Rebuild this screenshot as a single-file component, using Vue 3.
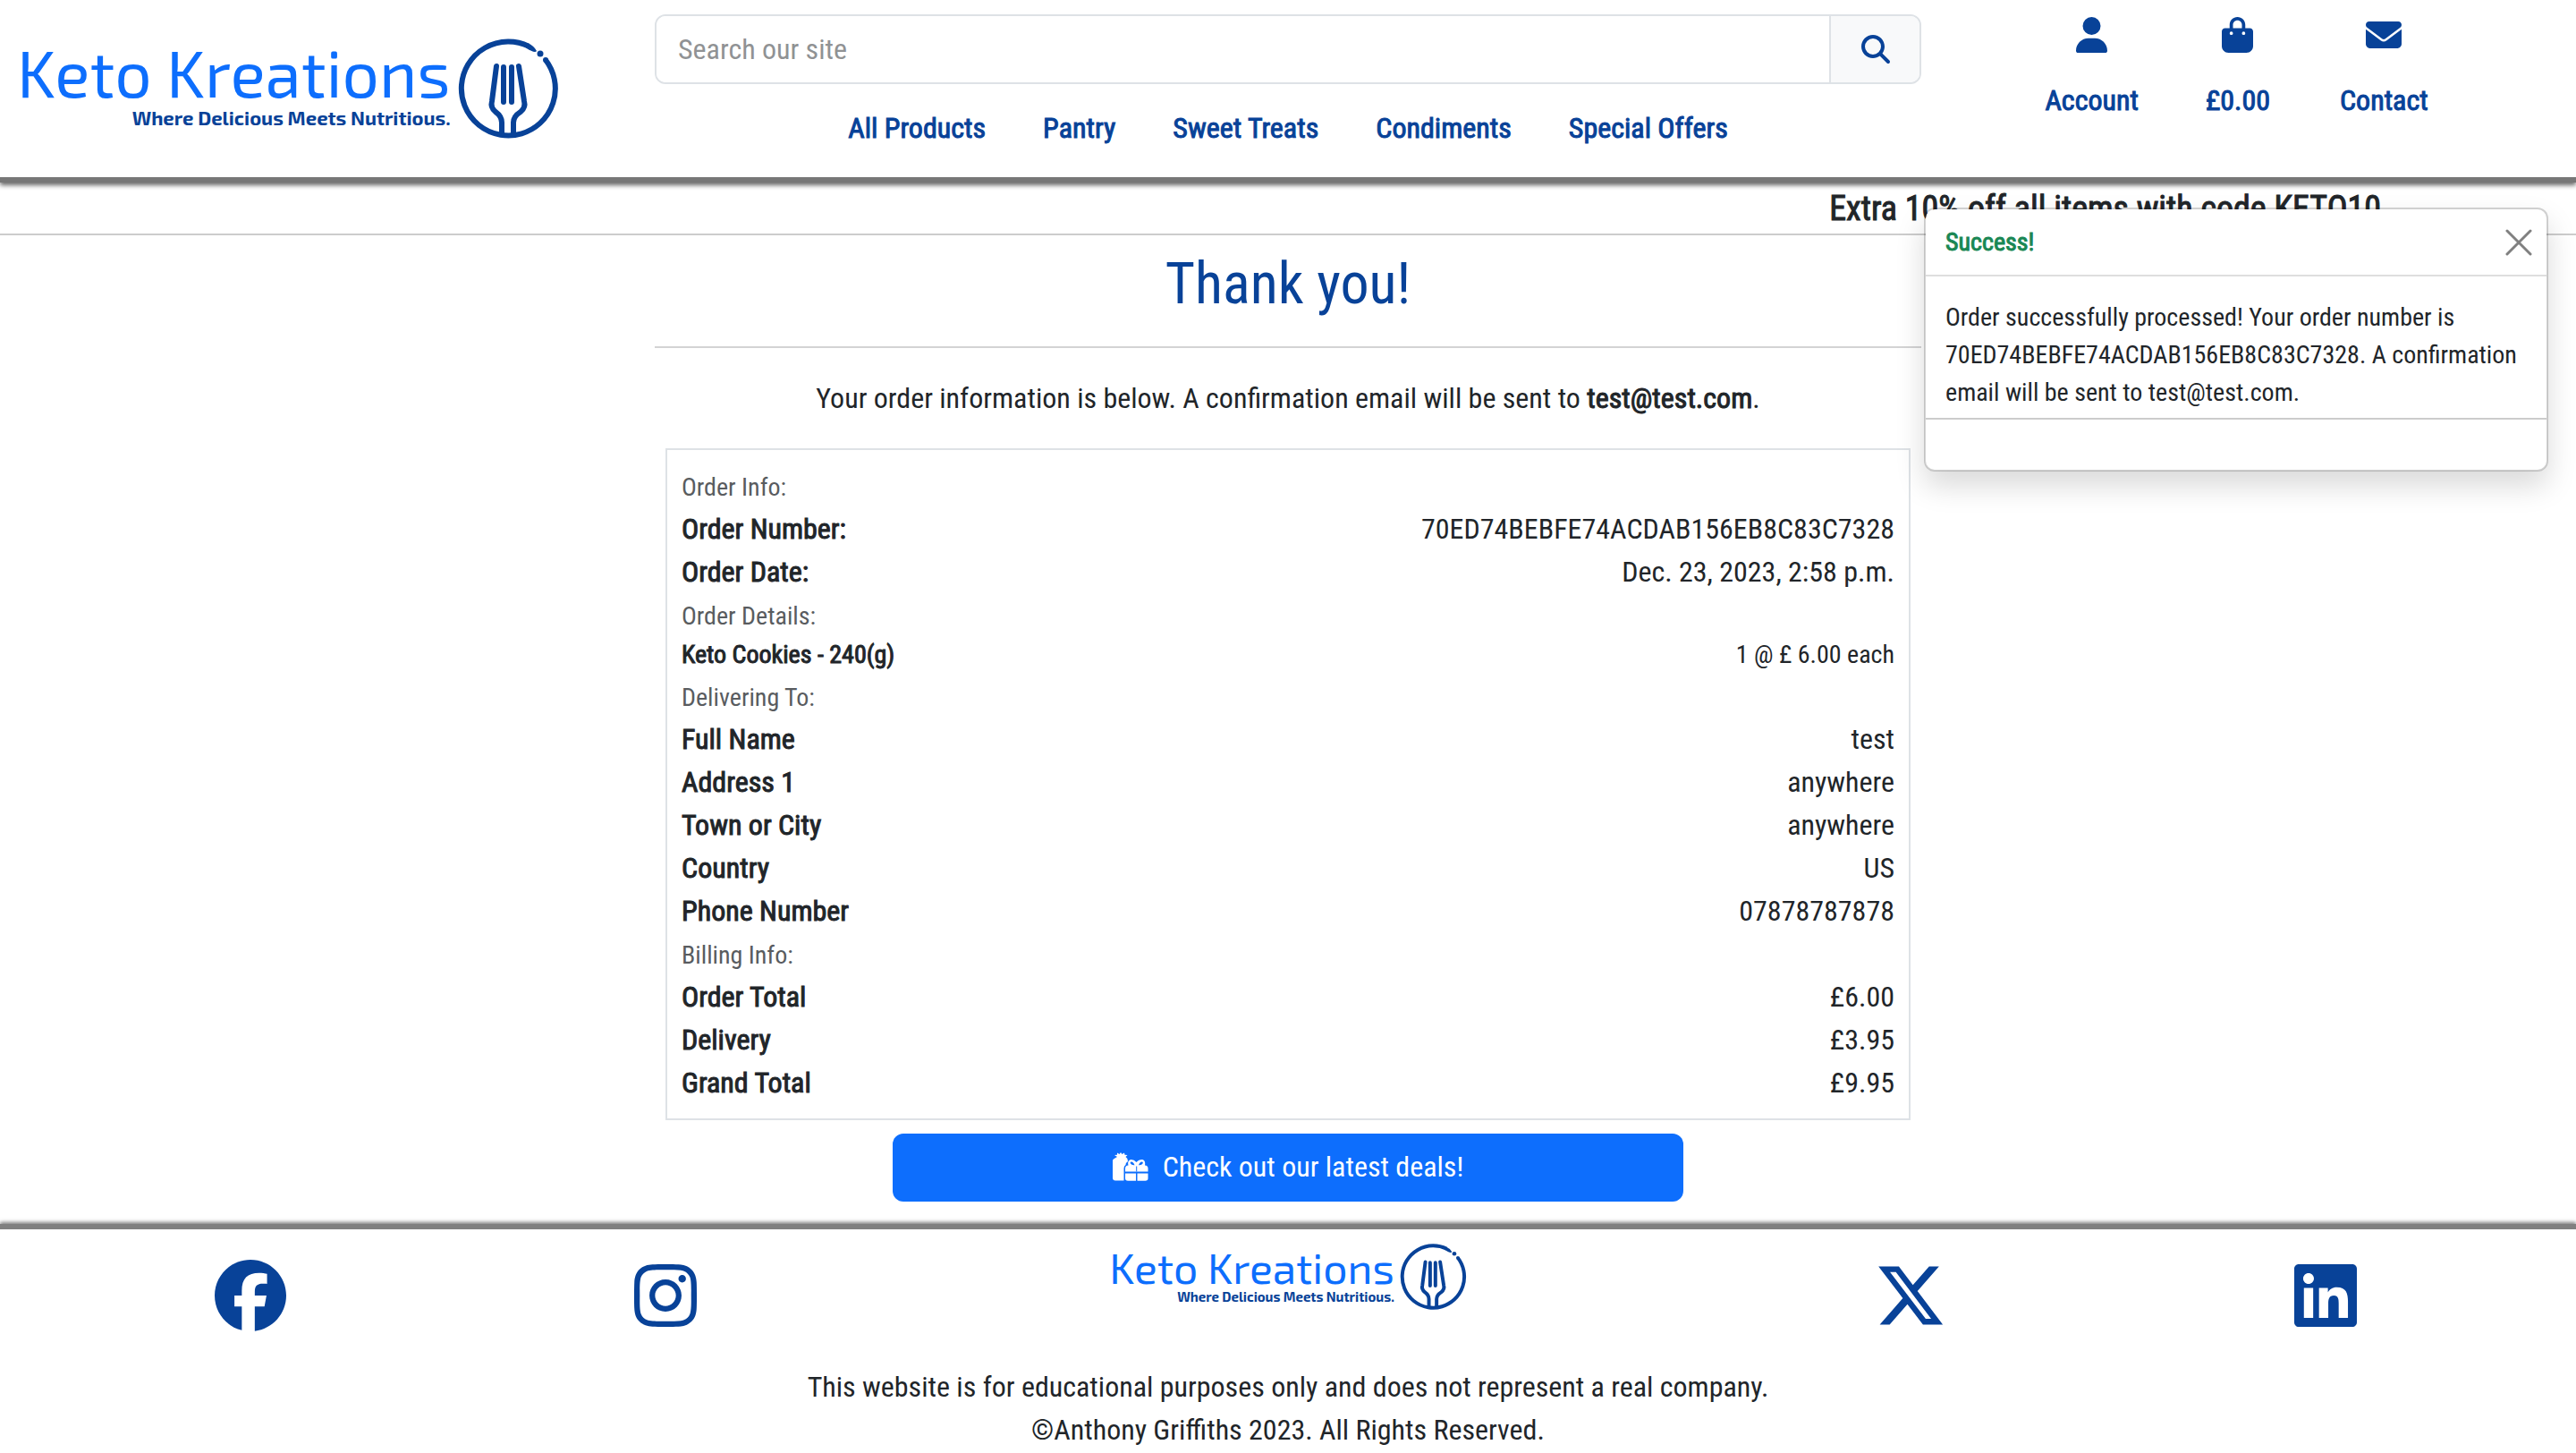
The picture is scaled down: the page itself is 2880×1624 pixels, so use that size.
<script setup>
import { ref } from 'vue'

const query = ref('')
const toastOpen = ref(true)

const categories = ['All Products', 'Pantry', 'Sweet Treats', 'Condiments', 'Special Offers']

const shortcuts = [
  {
    label: 'Account',
    box: '0 0 448 512',
    path: 'M224 256A128 128 0 1 0 224 0a128 128 0 1 0 0 256zm-45.7 48C79.8 304 0 383.8 0 482.3C0 498.7 13.3 512 29.7 512H418.3c16.4 0 29.7-13.3 29.7-29.7C448 383.8 368.2 304 269.7 304H178.3z',
  },
  {
    label: '£0.00',
    box: '0 0 448 512',
    path: 'M160 112c0-35.3 28.7-64 64-64s64 28.7 64 64v48H160V112zm-48 48H48c-26.5 0-48 21.5-48 48V416c0 53 43 96 96 96H352c53 0 96-43 96-96V208c0-26.5-21.5-48-48-48H336V112C336 50.1 285.9 0 224 0S112 50.1 112 112v48zm24 48a24 24 0 1 1 0 48 24 24 0 1 1 0-48zm152 24a24 24 0 1 1 48 0 24 24 0 1 1 -48 0z',
  },
  {
    label: 'Contact',
    box: '0 0 512 512',
    path: 'M48 64C21.5 64 0 85.5 0 112c0 15.1 7.1 29.3 19.2 38.4L236.8 313.6c11.4 8.5 27 8.5 38.4 0L492.8 150.4c12.1-9.1 19.2-23.3 19.2-38.4c0-26.5-21.5-48-48-48H48zM0 176V384c0 35.3 28.7 64 64 64H448c35.3 0 64-28.7 64-64V176L294.4 339.2c-22.8 17.1-54 17.1-76.8 0L0 176z',
  },
]

const orderNumber = '70ED74BEBFE74ACDAB156EB8C83C7328'

const sections = [
  {
    title: 'Order Info:',
    rows: [
      ['Order Number:', orderNumber],
      ['Order Date:', 'Dec. 23, 2023, 2:58 p.m.'],
    ],
  },
  { title: 'Order Details:', small: true, rows: [['Keto Cookies - 240(g)', '1 @ £ 6.00 each']] },
  {
    title: 'Delivering To:',
    rows: [
      ['Full Name', 'test'],
      ['Address 1', 'anywhere'],
      ['Town or City', 'anywhere'],
      ['Country', 'US'],
      ['Phone Number', '07878787878'],
    ],
  },
  {
    title: 'Billing Info:',
    rows: [
      ['Order Total', '£6.00'],
      ['Delivery', '£3.95'],
      ['Grand Total', '£9.95'],
    ],
  },
]
</script>

<template>
  <svg class="defs" aria-hidden="true">
    <symbol id="fork-mark" viewBox="0 0 113 112">
      <g fill="none" stroke="currentColor" stroke-width="6" stroke-linecap="round" stroke-linejoin="round">
        <path d="M98 24A52.5 52.5 0 1 1 79 8.6" stroke-linecap="butt" />
        <path d="M43 31L38 70Q36 77 42 82Q49 87 49 94V106" />
        <path d="M68 31L74 70Q76 77 70 82Q62 87 62 94V106" />
        <path d="M51 32V71M60 32V71" />
      </g>
      <path fill="currentColor" d="M78 5.2Q85 8 88 14Q86 17 76 10.5z" />
      <circle fill="currentColor" cx="92" cy="17" r="3.5" />
      <circle fill="currentColor" cx="98" cy="24" r="3" />
    </symbol>
  </svg>

  <header class="header">
    <a href="#" class="logo">
      <span class="logo-words">
        <span class="logo-name">Keto Kreations</span>
        <span class="logo-tag">Where Delicious Meets Nutritious.</span>
      </span>
      <svg class="logo-mark"><use href="#fork-mark" /></svg>
    </a>

    <div class="middle">
      <form class="search" @submit.prevent>
        <input v-model="query" type="text" placeholder="Search our site" aria-label="Search our site" />
        <button type="submit" aria-label="Search">
          <svg viewBox="0 0 512 512"><path fill="currentColor" d="M416 208c0 45.9-14.9 88.3-40 122.7L502.6 457.4c12.5 12.5 12.5 32.8 0 45.3s-32.8 12.5-45.3 0L330.7 376C296.3 401.1 253.9 416 208 416C93.1 416 0 322.9 0 208S93.1 0 208 0S416 93.1 416 208zM208 352a144 144 0 1 0 0-288 144 144 0 1 0 0 288z" /></svg>
        </button>
      </form>
      <nav class="nav">
        <a v-for="item in categories" :key="item" href="#" class="heavy">{{ item }}</a>
      </nav>
    </div>

    <div class="shortcuts">
      <a v-for="item in shortcuts" :key="item.label" href="#">
        <svg :viewBox="item.box"><path fill="currentColor" :d="item.path" /></svg>
        <span class="heavy">{{ item.label }}</span>
      </a>
    </div>
  </header>

  <div class="promo heavy">Extra 10% off all items with code KETO10</div>

  <main class="main">
    <h1>Thank you!</h1>
    <hr />
    <p class="lead">
      Your order information is below. A confirmation email will be sent to
      <strong class="heavy">test@test.com</strong>.
    </p>

    <div class="order">
      <section v-for="section in sections" :key="section.title">
        <h2>{{ section.title }}</h2>
        <dl :class="{ small: section.small }">
          <div v-for="row in section.rows" :key="row[0]" class="row">
            <dt class="heavy">{{ row[0] }}</dt>
            <dd>{{ row[1] }}</dd>
          </div>
        </dl>
      </section>
    </div>

    <a href="#" class="deals">
      <svg viewBox="0 0 40 32">
        <g fill="#fff">
          <path d="M2.5 6.5L5 5 2 3 5 2.7 5 .5 7.5 2 9 0 10.500 2 13 .5 13.500 2.700 16.500 3 14.500 5Q17 6.500 17 10Q14 12 14.500 14Q12.500 15 12.500 18V31.500H3Q0 31.500 0 28.500V9Q0 7.500 2.500 6.500z" />
          <path d="M14 21.500V18Q14 14.500 17.500 14.500Q16 9 20.500 8Q24 8 26.500 11Q29 8 33 8Q37 9 36 14.500Q39.500 14.500 39.500 18V21.500z" />
          <path d="M14 23.500H26V31.800H17Q14 31.800 14 29zM27.500 23.500H39.500V29Q39.500 31.800 36.500 31.800H27.500z" />
        </g>
        <path d="M20 12.500Q19 10.500 21 10.500T24.500 14.200Q21 14.500 20 12.500zM33.500 12.500Q34.500 10.500 32.500 10.500T29 14.200Q32.500 14.500 33.500 12.500zM26.200 15.500H27.200V21.500H26.200z" fill="#0d6efd" />
      </svg>
      Check out our latest deals!
    </a>
  </main>

  <footer class="footer">
    <div class="social">
      <a href="#" aria-label="Facebook"><svg viewBox="0 0 512 512"><path fill="currentColor" d="M512 256C512 114.600 397.400 0 256 0S0 114.600 0 256C0 376 82.700 476.800 194.200 504.500V334.200H141.400V256h52.800V222.300c0-87.100 39.400-127.500 125-127.500c16.200 0 44.200 3.200 55.700 6.400V172c-6-.600-16.500-1-29.600-1c-42 0-58.200 15.900-58.200 57.200V256h83.600l-14.400 78.200H287V510.100C413.800 494.800 512 386.900 512 256z" /></svg></a>
      <a href="#" aria-label="Instagram"><svg viewBox="-32 0 512 512"><path fill="currentColor" d="M224.1 141c-63.6 0-114.9 51.3-114.9 114.9s51.3 114.9 114.9 114.9S339 319.5 339 255.900 287.700 141 224.100 141zm0 189.600c-41.100 0-74.700-33.500-74.700-74.700s33.500-74.700 74.700-74.700 74.700 33.500 74.700 74.700-33.600 74.700-74.700 74.700zm146.400-194.300c0 14.900-12 26.800-26.800 26.800-14.900 0-26.800-12-26.800-26.800s12-26.800 26.800-26.800 26.800 12 26.800 26.800zm76.100 27.200c-1.700-35.900-9.900-67.700-36.200-93.900-26.200-26.200-58-34.400-93.900-36.200-37-2.100-147.900-2.100-184.900 0-35.800 1.700-67.600 9.900-93.900 36.100s-34.400 58-36.200 93.900c-2.100 37-2.100 147.900 0 184.900 1.700 35.900 9.900 67.700 36.200 93.900s58 34.400 93.900 36.200c37 2.100 147.900 2.100 184.900 0 35.900-1.700 67.700-9.900 93.900-36.200 26.200-26.200 34.400-58 36.200-93.900 2.100-37 2.100-147.800 0-184.800zM398.800 388c-7.800 19.600-22.900 34.700-42.600 42.600-29.500 11.700-99.500 9-132.100 9s-102.700 2.600-132.100-9c-19.600-7.800-34.700-22.900-42.600-42.600-11.700-29.500-9-99.500-9-132.100s-2.600-102.700 9-132.100c7.800-19.600 22.900-34.700 42.600-42.600 29.500-11.700 99.500-9 132.100-9s102.700-2.600 132.100 9c19.600 7.800 34.700 22.900 42.600 42.600 11.700 29.500 9 99.500 9 132.100s2.700 102.700-9 132.100z" /></svg></a>
      <a href="#" class="logo logo-small">
        <span class="logo-words">
          <span class="logo-name">Keto Kreations</span>
          <span class="logo-tag">Where Delicious Meets Nutritious.</span>
        </span>
        <svg class="logo-mark"><use href="#fork-mark" /></svg>
      </a>
      <a href="#" aria-label="X"><svg viewBox="0 0 512 512"><path fill="currentColor" d="M389.2 48h70.6L305.6 224.200 487 464H345L233.700 318.600 106.500 464H35.800L200.700 275.500 26.800 48H172.400L272.900 180.900 389.200 48zM364.400 421.800h39.100L151.100 88h-42L364.400 421.800z" /></svg></a>
      <a href="#" aria-label="LinkedIn"><svg viewBox="-32 0 512 512"><path fill="currentColor" d="M416 32H31.900C14.300 32 0 46.500 0 64.300v383.400C0 465.500 14.300 480 31.900 480H416c17.600 0 32-14.500 32-32.300V64.300c0-17.800-14.400-32.300-32-32.300zM135.400 416H69V202.200h66.500V416zm-33.200-243c-21.300 0-38.500-17.300-38.500-38.500S80.900 96 102.200 96c21.200 0 38.500 17.300 38.500 38.500 0 21.300-17.200 38.500-38.500 38.500zm282.100 243h-66.400V312c0-24.800-.5-56.700-34.500-56.700-34.600 0-39.900 27-39.900 54.900V416h-66.400V202.200h63.700v29.200h.9c8.900-16.800 30.600-34.500 62.900-34.500 67.200 0 79.700 44.300 79.700 101.900V416z" /></svg></a>
    </div>
    <p>This website is for educational purposes only and does not represent a real company.</p>
    <p>©Anthony Griffiths 2023. All Rights Reserved.</p>
  </footer>

  <div v-if="toastOpen" class="toast" role="alert">
    <div class="toast-head">
      <strong class="heavy">Success!</strong>
      <button type="button" aria-label="Close" @click="toastOpen = false">
        <svg viewBox="0 0 30 30"><path d="M2 2L28 28M28 2L2 28" stroke="currentColor" stroke-width="3" stroke-linecap="round" /></svg>
      </button>
    </div>
    <p>
      Order successfully processed! Your order number is {{ orderNumber }}. A confirmation email will be sent to
      test@test.com.
    </p>
    <div class="toast-foot"></div>
  </div>
</template>

<style>
body {
  background: #fff;
  color: #212529;
  font: 32px/48px "Roboto Condensed", "Liberation Sans Narrow", Roboto, sans-serif;
}
#app {
  position: relative;
}
</style>

<style scoped>
* {
  box-sizing: border-box;
}
a {
  color: #084298;
  text-decoration: none;
}
h1,
h2,
p,
dl,
dd {
  margin: 0;
}
/* Regular letterforms thickened with a stroke, so emphasis keeps the regular widths. */
.heavy {
  font-weight: 400;
  -webkit-text-stroke: 1px currentColor;
}
.defs {
  position: absolute;
  width: 0;
  height: 0;
}
.header {
  position: relative;
  display: grid;
  grid-template-columns: 1fr 2fr 1fr;
  height: 204px;
  border-bottom: 6px solid #777;
  box-shadow: 0 3px 5px rgba(0, 0, 0, 0.6);
}
.logo {
  display: flex;
  align-items: flex-start;
  gap: 8px;
}
.header .logo {
  padding: 43px 0 0 19px;
}
.logo-words {
  display: flex;
  flex-direction: column;
  align-items: flex-end;
  font-family: "Exo 2", "Titillium Web", "Noto Sans", sans-serif;
  white-space: nowrap;
}
.logo-name {
  color: #0d6efd;
  font-size: 73px;
  line-height: 75px;
}
.logo-tag {
  font-size: 22px;
  font-weight: 700;
  line-height: 26px;
}
.logo-mark {
  flex: none;
  width: 113px;
  height: 112px;
}
.middle {
  padding: 16px 12px 0;
}
.search {
  display: flex;
  height: 78px;
  border: 2px solid #dee2e6;
  border-radius: 12px;
  overflow: hidden;
}
.search input {
  flex: 1;
  min-width: 0;
  padding: 0 24px;
  border: 0;
  outline: 0;
  color: inherit;
  font: inherit;
}
.search input::placeholder {
  color: #909294;
}
.search button {
  display: flex;
  align-items: center;
  justify-content: center;
  width: 101px;
  border: 0;
  border-left: 2px solid #dee2e6;
  background: #f8f9fa;
  color: #084298;
}
.search svg {
  width: 32px;
  height: 32px;
}
.nav {
  display: flex;
  justify-content: center;
  gap: 64px;
  padding-top: 25px;
}
.shortcuts {
  display: grid;
  grid-template-columns: repeat(3, 1fr);
  align-content: start;
  padding: 19px 133px 0 97px;
}
.shortcuts a {
  display: flex;
  flex-direction: column;
  align-items: center;
  gap: 29px;
}
.shortcuts svg {
  height: 40px;
}
.promo {
  display: flex;
  justify-content: flex-end;
  height: 59px;
  padding-right: 218px;
  border-bottom: 2px solid #ccc;
  font-size: 38px;
  line-height: 58px;
}
.main {
  width: 50%;
  margin: 0 auto;
  padding: 16px 12px 25px;
}
h1 {
  color: #084298;
  font-size: 64px;
  font-weight: 400;
  line-height: 78px;
  text-align: center;
}
hr {
  margin: 30px 0 32px;
  border: 0;
  border-top: 2px solid #d3d3d4;
}
.lead {
  margin-bottom: 32px;
  text-align: center;
}
.order {
  margin: 0 12px;
  padding: 16px;
  border: 2px solid #dee2e6;
}
h2 {
  padding-top: 3px;
  color: #595c5f;
  font-size: 28px;
  font-weight: 400;
  line-height: 45px;
}
.row {
  display: flex;
  justify-content: space-between;
}
.small {
  padding-bottom: 1px;
  font-size: 28px;
  line-height: 42px;
}
.deals {
  display: flex;
  align-items: center;
  justify-content: center;
  gap: 16px;
  width: 62.4%;
  height: 76px;
  margin: 15px auto 0;
  padding-bottom: 2px;
  border-radius: 12px;
  background: #0d6efd;
  color: #fff;
}
.deals svg {
  width: 40px;
  height: 32px;
}
.footer {
  border-top: 6px solid #808080;
  box-shadow: 0 -2px 4px rgba(0, 0, 0, 0.5);
  text-align: center;
}
.social {
  display: grid;
  grid-template-columns: 1fr 1fr 2fr 1fr 1fr;
  height: 152px;
  margin: 0 48px;
}
.social a {
  display: flex;
  justify-content: center;
  padding-top: 34px;
}
.social a > svg {
  width: 80px;
  height: 80px;
}
.social .logo-small {
  gap: 6px;
  padding-top: 16px;
}
.logo-small .logo-name {
  font-size: 48px;
  line-height: 52px;
}
.logo-small .logo-tag {
  font-size: 15px;
  line-height: 14px;
}
.social .logo-small .logo-mark {
  width: 75px;
  height: 74px;
}
.toast {
  position: absolute;
  top: 232px;
  right: 31px;
  width: 698px;
  border: 2px solid rgba(0, 0, 0, 0.175);
  border-radius: 12px;
  background: #fff;
  background-clip: padding-box;
  box-shadow: 0 16px 32px rgba(0, 0, 0, 0.15);
  font-size: 28px;
  line-height: 42px;
}
.toast-head {
  display: flex;
  align-items: center;
  justify-content: space-between;
  height: 75px;
  padding: 0 16px 0 22px;
  border-bottom: 2px solid #dedede;
  color: #198754;
}
.toast-head button {
  display: flex;
  padding: 0;
  border: 0;
  background: none;
  color: #808080;
}
.toast-head svg {
  width: 30px;
  height: 30px;
}
.toast p {
  padding: 25px 22px 7px;
}
.toast-foot {
  height: 58px;
  border-top: 2px solid #ccc;
}
</style>
